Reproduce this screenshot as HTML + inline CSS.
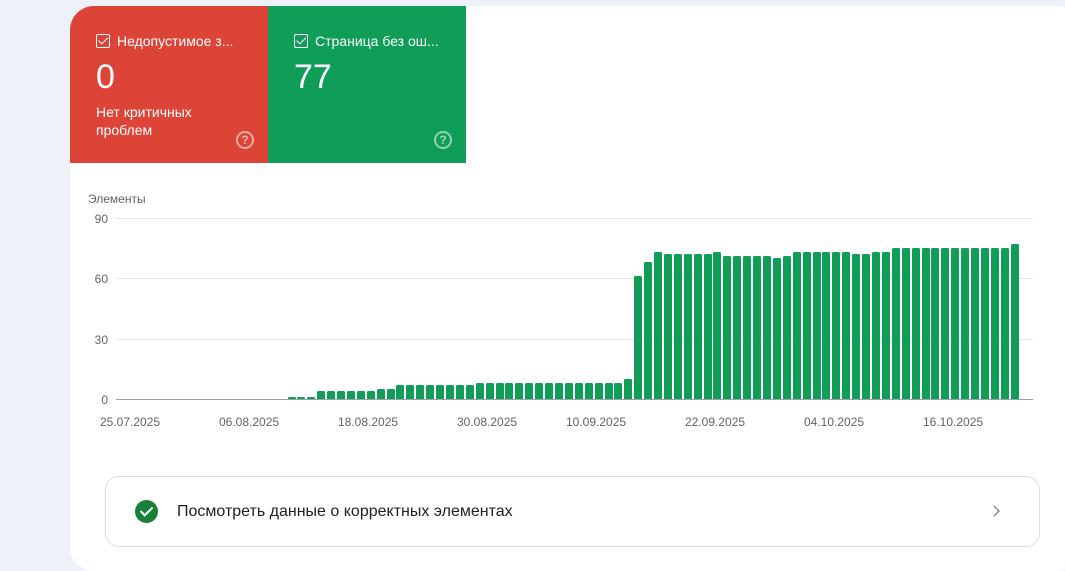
<!DOCTYPE html>
<html><head><meta charset="utf-8"><style>
*{margin:0;padding:0;box-sizing:border-box}
body{width:1065px;height:571px;background:#eef2f8;font-family:"Liberation Sans",sans-serif;position:relative;overflow:hidden}
.card{position:absolute;left:70px;top:6px;width:1010px;height:565px;background:#fff;border-radius:24px;overflow:hidden}
.tile{position:absolute;top:0;height:157px;width:198px;color:#fff}
.red{left:0;background:#db4437}
.green{left:198px;background:#0f9d58}
.cb{position:absolute;left:26px;top:28px;width:14px;height:14px;border:1.6px solid #fff;border-radius:2px}
.cb:after{content:"";position:absolute;left:3.5px;top:0px;width:3.5px;height:7.5px;border:solid #fff;border-width:0 1.7px 1.7px 0;transform:rotate(45deg)}
.tt{position:absolute;left:47px;top:27px;font-size:14px}
.num{position:absolute;left:26px;top:52px;font-size:34px}
.sub{position:absolute;left:26px;top:97px;font-size:14px;line-height:18px}
.q{position:absolute;left:166px;top:125px;width:18px;height:18px;border:2px solid rgba(255,255,255,.55);border-radius:50%;color:rgba(255,255,255,.6);font-size:12px;font-weight:bold;text-align:center;line-height:14px}
.lab{position:absolute;font-size:12px;color:#5f6368}
.grid{position:absolute;left:116px;width:917px;height:1px;background:#e8e8e8}
.bars{position:absolute;left:129px;top:218px;height:181px;display:flex;align-items:flex-end}
.bars i{display:block;width:8px;margin-right:1.92px;background:#0f9d58;border-radius:1.5px 1.5px 0 0;height:calc(var(--v)*2.011px)}
.btn{position:absolute;left:105px;top:476px;width:935px;height:71px;border:1px solid #dadce0;border-radius:14px;background:#fff}
.ok{position:absolute;left:29px;top:23px;width:23px;height:23px;border-radius:50%;background:#188038}
.ok:after{content:"";position:absolute;left:8px;top:4px;width:5px;height:10px;border:solid #fff;border-width:0 2.4px 2.4px 0;transform:rotate(45deg)}
.bt{position:absolute;left:71px;top:26px;font-size:16px;color:#202124}
.chev{position:absolute;left:884px;top:30px;width:8px;height:8px;border:solid #5f6368;border-width:1.7px 1.7px 0 0;transform:rotate(45deg)}
</style></head><body>
<div class="card">
<div class="tile red"><div class="cb"></div><div class="tt">Недопустимое з...</div><div class="num">0</div><div class="sub">Нет критичных<br>проблем</div><div class="q">?</div></div>
<div class="tile green"><div class="cb"></div><div class="tt">Страница без ош...</div><div class="num">77</div><div class="q">?</div></div>
</div>
<div class="lab" style="left:88px;top:192px">Элементы</div>
<div class="lab" style="left:88px;top:212px;width:20px;text-align:right">90</div>
<div class="lab" style="left:88px;top:272px;width:20px;text-align:right">60</div>
<div class="lab" style="left:88px;top:333px;width:20px;text-align:right">30</div>
<div class="lab" style="left:88px;top:393px;width:20px;text-align:right">0</div>
<div class="grid" style="top:218px"></div>
<div class="grid" style="top:278px"></div>
<div class="grid" style="top:339px"></div>
<div class="bars">
<i style="--v:0"></i><i style="--v:0"></i><i style="--v:0"></i><i style="--v:0"></i><i style="--v:0"></i><i style="--v:0"></i><i style="--v:0"></i><i style="--v:0"></i><i style="--v:0"></i><i style="--v:0"></i><i style="--v:0"></i><i style="--v:0"></i><i style="--v:0"></i><i style="--v:0"></i><i style="--v:0"></i><i style="--v:0"></i>
<i style="--v:1"></i><i style="--v:1"></i><i style="--v:1"></i>
<i style="--v:4"></i><i style="--v:4"></i><i style="--v:4"></i><i style="--v:4"></i><i style="--v:4"></i><i style="--v:4"></i>
<i style="--v:5"></i><i style="--v:5"></i>
<i style="--v:7"></i><i style="--v:7"></i><i style="--v:7"></i><i style="--v:7"></i><i style="--v:7"></i><i style="--v:7"></i><i style="--v:7"></i><i style="--v:7"></i>
<i style="--v:8"></i><i style="--v:8"></i><i style="--v:8"></i><i style="--v:8"></i><i style="--v:8"></i><i style="--v:8"></i><i style="--v:8"></i><i style="--v:8"></i><i style="--v:8"></i><i style="--v:8"></i><i style="--v:8"></i><i style="--v:8"></i><i style="--v:8"></i><i style="--v:8"></i><i style="--v:8"></i>
<i style="--v:10"></i><i style="--v:61"></i>
<i style="--v:68"></i><i style="--v:73"></i><i style="--v:72"></i><i style="--v:72"></i><i style="--v:72"></i><i style="--v:72"></i><i style="--v:72"></i><i style="--v:73"></i><i style="--v:71"></i><i style="--v:71"></i><i style="--v:71"></i><i style="--v:71"></i><i style="--v:71"></i><i style="--v:70"></i><i style="--v:71"></i><i style="--v:73"></i><i style="--v:73"></i><i style="--v:73"></i><i style="--v:73"></i><i style="--v:73"></i><i style="--v:73"></i><i style="--v:72"></i><i style="--v:72"></i><i style="--v:73"></i><i style="--v:73"></i><i style="--v:75"></i><i style="--v:75"></i><i style="--v:75"></i><i style="--v:75"></i><i style="--v:75"></i><i style="--v:75"></i><i style="--v:75"></i><i style="--v:75"></i><i style="--v:75"></i><i style="--v:75"></i><i style="--v:75"></i><i style="--v:75"></i><i style="--v:77"></i>
</div>
<div style="position:absolute;left:116px;top:399px;width:917px;height:1px;background:#9aa0a6"></div>
<div class="lab" style="left:100px;top:415px">25.07.2025</div>
<div class="lab" style="left:219px;top:415px">06.08.2025</div>
<div class="lab" style="left:338px;top:415px">18.08.2025</div>
<div class="lab" style="left:457px;top:415px">30.08.2025</div>
<div class="lab" style="left:566px;top:415px">10.09.2025</div>
<div class="lab" style="left:685px;top:415px">22.09.2025</div>
<div class="lab" style="left:804px;top:415px">04.10.2025</div>
<div class="lab" style="left:923px;top:415px">16.10.2025</div>
<div class="btn"><div class="ok"></div><div class="bt">Посмотреть данные о корректных элементах</div><div class="chev"></div></div>
</body></html>
